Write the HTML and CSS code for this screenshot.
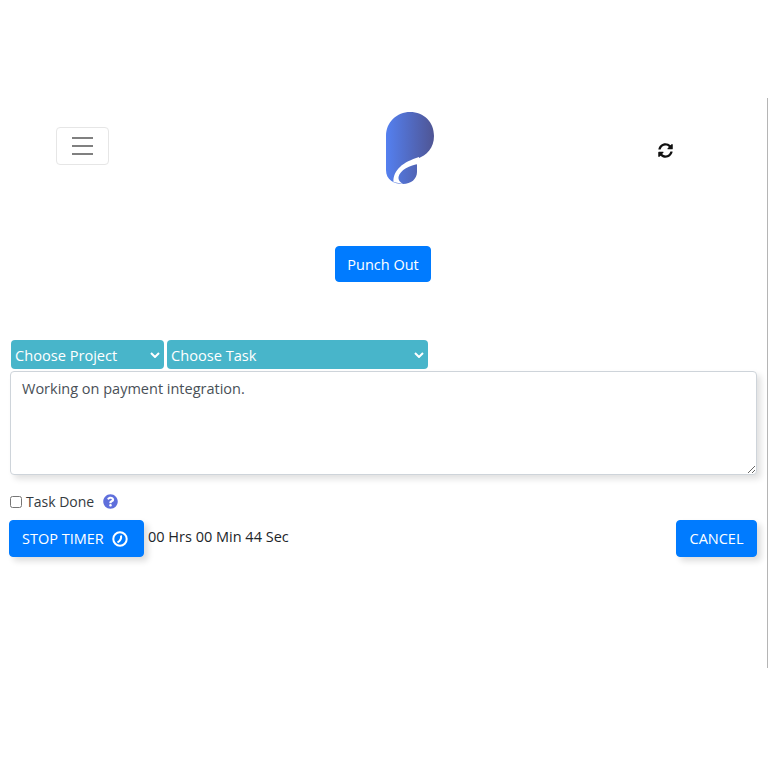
FILE: index.html
```html
<!DOCTYPE html>
<html lang="en">
<head>
  <meta charset="UTF-8">
  <title>Timer</title>
  <link rel="stylesheet" href="styles.css">
</head>
<body>
  <div class="frame">
    <header class="top-bar">
      <button class="menu-btn" type="button" aria-label="Menu">
        <span></span><span></span><span></span>
      </button>
      <svg class="logo" viewBox="0 0 49 72" aria-label="Logo">
        <defs>
          <linearGradient id="logo-grad" x1="0" x2="1" y1="0" y2="0">
            <stop offset="0" stop-color="#5480f0"/>
            <stop offset="1" stop-color="#4f5594"/>
          </linearGradient>
        </defs>
        <path fill="url(#logo-grad)" d="M0 24C0 10 11 0 24 0C38 0 48 10 48 24C48 36 41 43 31 47L31 60C31 67 25 72 17 72C8 72 0 68 0 58Z"/>
        <path fill="#fff" d="M7.5 70C7 58 17 50 33 45L33 52C24 53 14 58 12.5 65C12 68 14 70 17 72Z"/>
      </svg>
      <svg class="refresh" viewBox="0 0 512 512" aria-label="Refresh">
        <path d="M370.72 133.28C339.458 104.008 298.888 87.962 255.848 88c-77.458.068-144.328 53.178-162.791 126.85-1.344 5.363-6.122 9.15-11.651 9.15H24.103c-7.498 0-13.194-6.807-11.807-14.176C33.933 94.924 134.813 8 256 8c66.448 0 126.791 26.136 171.315 68.685L463.03 40.97C478.149 25.851 504 36.559 504 57.941V192c0 13.255-10.745 24-24 24H345.941c-21.382 0-32.09-25.851-16.971-40.971l41.75-41.749zM32 296h134.059c21.382 0 32.09 25.851 16.971 40.971l-41.75 41.75c31.262 29.273 71.835 45.319 114.876 45.28 77.418-.07 144.315-53.144 162.787-126.849 1.344-5.363 6.122-9.15 11.651-9.15h57.304c7.498 0 13.194 6.807 11.807 14.176C478.067 417.076 377.187 504 256 504c-66.448 0-126.791-26.136-171.315-68.685L48.97 471.03C33.851 486.149 8 475.441 8 454.059V320c0-13.255 10.745-24 24-24z"/>
      </svg>
    </header>

    <div class="punch-row">
      <button class="btn punch-btn" type="button">Punch Out</button>
    </div>

    <div class="select-row">
      <div class="pick pick-project">Choose Project<svg class="chev" viewBox="0 0 10 6"><path d="M1 1l4 4 4-4"/></svg></div>
      <div class="pick pick-task">Choose Task<svg class="chev" viewBox="0 0 10 6"><path d="M1 1l4 4 4-4"/></svg></div>
    </div>

    <textarea class="notes">Working on payment integration.</textarea>

    <div class="done-row">
      <input type="checkbox" id="task-done">
      <label for="task-done">Task Done</label>
      <svg class="help" viewBox="0 0 512 512" aria-label="Help">
        <path d="M504 256c0 136.997-111.043 248-248 248S8 392.997 8 256C8 119.083 119.043 8 256 8s248 111.083 248 248zM262.655 90c-54.497 0-89.255 22.957-116.549 63.758-3.536 5.286-2.353 12.415 2.715 16.258l34.699 26.31c5.205 3.947 12.621 3.008 16.665-2.122 17.864-22.658 30.113-35.797 57.303-35.797 20.429 0 45.698 13.148 45.698 32.958 0 14.976-12.363 22.667-32.534 33.976C247.128 238.528 216 254.941 216 296v4c0 6.627 5.373 12 12 12h56c6.627 0 12-5.373 12-12v-1.333c0-28.462 83.186-29.647 83.186-106.667 0-58.002-60.165-102-116.531-102zM256 338c-25.365 0-46 20.635-46 46 0 25.364 20.635 46 46 46s46-20.636 46-46c0-25.365-20.635-46-46-46z"/>
      </svg>
    </div>

    <div class="timer-row">
      <button class="btn raised stop-btn" type="button">STOP TIMER
        <svg class="stop-icon" viewBox="0 0 16 16"><circle cx="8" cy="8" r="6.7"/><path d="M9 4.5C9.5 7 8 10 5.5 11.5"/></svg>
      </button>
      <span class="elapsed">00 Hrs 00 Min 44 Sec</span>
      <button class="btn raised cancel-btn" type="button">CANCEL</button>
    </div>
  </div>
</body>
</html>
```

FILE: styles.css
```css
* {
  margin: 0;
  padding: 0;
  box-sizing: border-box;
}

body {
  font-family: 'Open Sans', 'Noto Sans', sans-serif;
  font-size: 14.5px;
  color: #212529;
  background: #fff;
}

.frame {
  margin-top: 98px;
  height: 570px;
  padding: 14px 10px 0 9px;
  border-right: 1px solid #b5b5b5;
}

.top-bar {
  position: relative;
  display: flex;
  align-items: flex-start;
  height: 134px;
}

.menu-btn {
  display: flex;
  flex-direction: column;
  justify-content: center;
  gap: 6px;
  width: 53px;
  height: 38px;
  margin: 15px 0 0 47px;
  padding: 0 15px;
  background: #fff;
  border: 1px solid #e6e6e6;
  border-radius: 4px;
}

.menu-btn span {
  display: block;
  height: 2px;
  background: #808080;
}

.logo {
  width: 49px;
  height: 72px;
  margin-left: 277px;
}

.refresh {
  width: 15px;
  height: 15px;
  margin: 31px 0 0 223px;
  fill: #111;
}

.punch-row {
  display: flex;
  justify-content: center;
  height: 94px;
}

.btn {
  font-family: inherit;
  font-size: 14.5px;
  color: #fff;
  background: #007bff;
  border: 1px solid #007bff;
  border-radius: 4px;
}

.punch-btn {
  width: 96px;
  height: 36px;
}

.select-row {
  display: flex;
  gap: 3px;
  padding-left: 2px;
}

.pick {
  display: flex;
  align-items: center;
  justify-content: space-between;
  height: 29px;
  padding: 1px 4px 0 4px;
  font-size: 14.6px;
  color: #fff;
  background: #48b5ca;
  border-radius: 4px;
}

.pick-project {
  width: 153px;
}

.pick-task {
  width: 261px;
}

.chev {
  width: 10px;
  height: 6px;
  fill: none;
  stroke: #fff;
  stroke-width: 2;
}

.notes {
  display: block;
  width: 747px;
  height: 104px;
  margin: 2px 0 0 1px;
  padding: 5px 11px;
  font-family: inherit;
  font-size: 14.5px;
  line-height: 24px;
  color: #495057;
  background: #fff;
  border: 1px solid #ced4da;
  border-radius: 4px;
  box-shadow: 4px 4px 6px rgba(0, 0, 0, 0.12);
}

.done-row {
  display: flex;
  align-items: center;
  height: 45px;
  padding: 8px 0 0 1px;
  color: #343a40;
}

.done-row input {
  width: 12px;
  height: 12px;
  margin: 0 4px 0 0;
}

.done-row label {
  font-size: 14px;
}

.help {
  width: 15px;
  height: 15px;
  margin-left: 9px;
  fill: #5f6fdc;
}

.timer-row {
  display: flex;
  align-items: flex-start;
}

.raised {
  height: 37px;
  box-shadow: 4px 4px 6px rgba(0, 0, 0, 0.14);
}

.stop-btn {
  display: flex;
  align-items: center;
  gap: 8px;
  width: 135px;
  padding-left: 12px;
}

.stop-icon {
  width: 16px;
  height: 16px;
  fill: none;
  stroke: #fff;
  stroke-width: 2;
}

.elapsed {
  margin: 7px auto 0 4px;
}

.cancel-btn {
  width: 81px;
}
```
